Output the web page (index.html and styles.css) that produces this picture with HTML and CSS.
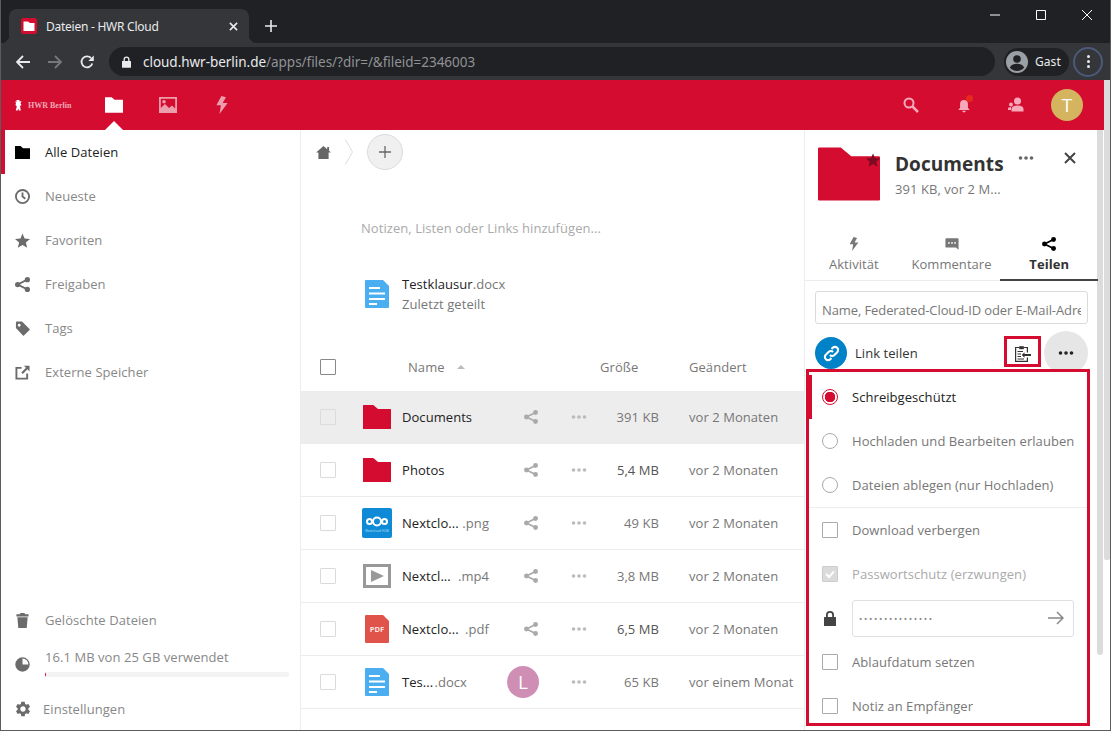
FILE: index.html
```html
<!DOCTYPE html>
<html lang="de">
<head>
  <meta charset="UTF-8" />
  <title>Dateien - HWR Cloud</title>
  <link rel="stylesheet" href="styles.css">
</head>
<body>
  <svg class="sprite" xmlns="http://www.w3.org/2000/svg">
    <symbol id="i-folder" viewBox="0 0 28 24"><path d="M0 .5Q0 0 .5 0H10.300L15 4H27.500Q28 4 28 4.500V23.500Q28 24 27.500 24H.5Q0 24 0 23.500Z"/></symbol>
    <symbol id="i-share" viewBox="0 0 16 16"><circle cx="2.800" cy="8" r="2.800"/><circle cx="13.200" cy="2.800" r="2.800"/><circle cx="13.200" cy="13.200" r="2.800"/><path d="M2.800 8 13.200 2.800M2.800 8l10.400 5.200" fill="none" stroke="currentColor" stroke-width="2"/></symbol>
    <symbol id="i-dots" viewBox="0 0 16 4"><circle cx="2.500" cy="2" r="1.800"/><circle cx="8" cy="2" r="1.800"/><circle cx="13.500" cy="2" r="1.800"/></symbol>
    <symbol id="i-bolt" viewBox="0 0 12 16"><path d="M5.500 0 1 8.300H5L3.800 16 11 6.300H6.600L9.500 1.200Z"/></symbol>
    <symbol id="i-clock" viewBox="0 0 16 16"><circle cx="8" cy="8" r="7" fill="none" stroke="currentColor" stroke-width="2"/><path d="M8 3.600V8l3 2.400" fill="none" stroke="currentColor" stroke-width="2"/></symbol>
    <symbol id="i-star" viewBox="0 0 16 16"><path d="M8 .5 10.200 5.800 16 6.300 11.600 10.100 13 15.700 8 12.700 3 15.700 4.400 10.100 0 6.300 5.800 5.800Z"/></symbol>
    <symbol id="i-tag" viewBox="0 0 16 16"><path d="M1 1.500Q1 .5 2 .5H7.500L15.500 8.500Q16 9 15.500 9.500L9.500 15.500Q9 16 8.500 15.500L1 7.500ZM4.500 3A1.500 1.500 0 1 0 4.500 6 1.500 1.500 0 0 0 4.500 3Z" fill-rule="evenodd"/></symbol>
    <symbol id="i-external" viewBox="0 0 16 16"><path d="M7 3H1.500V14.500H13V9" fill="none" stroke="currentColor" stroke-width="2"/><path d="M9.500 .8H15.500V6.800L13.300 4.600 8.300 9.600 6.700 8 11.700 3Z"/></symbol>
    <symbol id="i-trash" viewBox="0 0 16 16"><path d="M6 0H10L11 1.200H14.500V3.600H1.500V1.200H5ZM2.500 4.600H13.500L12.500 16H3.500Z"/></symbol>
    <symbol id="i-pie" viewBox="0 0 16 16"><path d="M8 8V1A7 7 0 1 0 15 8Z"/><circle cx="8" cy="8" r="7" fill="none" stroke="currentColor" stroke-width="1.400"/></symbol>
    <symbol id="i-gear" viewBox="0 0 24 24"><path d="M19.140 12.940c.04-.3.06-.61.06-.94 0-.32-.02-.64-.07-.94l2.030-1.580c.18-.14.23-.41.12-.61l-1.920-3.320c-.12-.22-.37-.29-.59-.22l-2.390.96c-.5-.38-1.030-.7-1.620-.94l-.36-2.540c-.04-.24-.24-.41-.48-.41h-3.840c-.24 0-.43.17-.47.41l-.36 2.540c-.59.24-1.130.57-1.620.94l-2.390-.96c-.22-.08-.47 0-.59.22L2.740 8.870c-.12.21-.08.47.12.61l2.030 1.580c-.05.3-.09.63-.09.94s.02.64.07.94l-2.030 1.580c-.18.14-.23.41-.12.61l1.920 3.320c.12.22.37.29.59.22l2.390-.96c.5.38 1.030.7 1.620.94l.36 2.540c.05.24.24.41.48.41h3.840c.24 0 .44-.17.47-.41l.36-2.540c.59-.24 1.130-.56 1.620-.94l2.390.96c.22.08.47 0 .59-.22l1.920-3.320c.12-.22.07-.47-.12-.61l-2.010-1.580zM12 15.600c-1.980 0-3.600-1.620-3.600-3.600s1.620-3.600 3.600-3.600 3.600 1.620 3.600 3.600-1.620 3.600-3.600 3.600z"/></symbol>
    <symbol id="i-doc" viewBox="0 0 24 28"><path d="M1 0H18L24 6V27Q24 28 23 28H1Q0 28 0 27V1Q0 0 1 0Z"/><path d="M4 7H15V9H4ZM4 12.500H20V14.500H4ZM4 18H20V20H4ZM4 23H12V25H4Z" fill="#fff"/></symbol>
    <symbol id="i-lock" viewBox="0 0 12 15"><path d="M6 0A4 4 0 0 1 10 4V6H11.500Q12 6 12 6.500V14.500Q12 15 11.500 15H.5Q0 15 0 14.500V6.500Q0 6 .5 6H2V4A4 4 0 0 1 6 0ZM6 1.800A2.200 2.200 0 0 0 3.800 4V6H8.200V4A2.200 2.200 0 0 0 6 1.800Z"/></symbol>
  </svg>

  <div class="window">
    <div class="titlebar">
      <div class="tab">
        <svg class="favicon" viewBox="0 0 16 16"><rect width="16" height="16" rx="2.500" fill="#d40c30"/><path d="M2.500 3.500H7L9 5H13.500V13H2.500Z" fill="#fff"/></svg>
        <span class="tab-title">Dateien - HWR Cloud</span>
        <svg class="tab-close" viewBox="0 0 10 10"><path d="M1 1 9 9M9 1 1 9" stroke="#e8eaed" stroke-width="1.800"/></svg>
      </div>
      <svg class="new-tab" viewBox="0 0 12 12"><path d="M6 0V12M0 6H12" stroke="#e8eaed" stroke-width="1.600"/></svg>
      <div class="win-controls">
        <div class="win-btn"><svg viewBox="0 0 10 10"><path d="M0 5H10" stroke="#fff"/></svg></div>
        <div class="win-btn"><svg viewBox="0 0 10 10"><path d="M.5.5H9.500V9.500H.5Z" fill="none" stroke="#fff"/></svg></div>
        <div class="win-btn"><svg viewBox="0 0 10 10"><path d="M0 0 10 10M10 0 0 10" stroke="#fff"/></svg></div>
      </div>
    </div>

    <div class="toolbar">
      <svg class="nav-btn" viewBox="0 0 14 14"><path d="M14 7H1.500M7 1 1 7l6 6" fill="none" stroke="#e8eaed" stroke-width="1.800"/></svg>
      <svg class="nav-btn" viewBox="0 0 14 14"><path d="M0 7H12.500M7 1l6 6-6 6" fill="none" stroke="#77787a" stroke-width="1.800"/></svg>
      <svg class="nav-btn" viewBox="0 0 14 14"><path d="M12.300 8.500A5.500 5.500 0 1 1 11 3" fill="none" stroke="#e8eaed" stroke-width="1.800"/><path d="M13.800 .5V6H8.300Z" fill="#e8eaed"/></svg>
      <div class="omnibox">
        <svg class="omni-lock"><use href="#i-lock"/></svg>
        <span class="url"><b>cloud.hwr-berlin.de</b>/apps/files/?dir=/&amp;fileid=2346003</span>
      </div>
      <div class="guest">
        <svg class="guest-pic" viewBox="0 0 22 22"><circle cx="11" cy="11" r="11" fill="#9aa0a6"/><circle cx="11" cy="8" r="3.800" fill="#202124"/><path d="M3.800 16.500C5.500 13.500 8 12.800 11 12.800S16.500 13.500 18.200 16.500C16.500 18.800 14 20 11 20S5.500 18.800 3.800 16.500Z" fill="#202124"/></svg>
        <span>Gast</span>
      </div>
      <div class="chrome-menu"><i></i><i></i><i></i></div>
    </div>

    <div class="page">
      <div class="main">
        <header class="app-header">
          <div class="logo">
            <svg class="logo-bear" viewBox="0 0 7 11"><path d="M1.500 0H4.500V1.500L6.500 1 5.500 3.500 6.500 5 5 6 5.800 10.500H3.800L3.300 8.500 2.500 10.500H.8L1.800 6.500 .5 5 1 3 0 1.500 1.500 1.800Z" fill="#fff"/></svg>
            <span>HWR Berlin</span>
          </div>
          <nav class="app-menu">
            <a class="app-link is-active"><svg class="ic-files"><use href="#i-folder"/></svg></a>
            <a class="app-link">
              <svg class="ic-photos" viewBox="0 0 18 16"><path d="M0 0H18V16H0ZM1.800 1.800V11L6 7 10 11 13 8.500 16.200 11.500V1.800ZM5 3A1.800 1.800 0 1 0 5 6.600 1.800 1.800 0 0 0 5 3Z" fill-rule="evenodd"/></svg>
            </a>
            <a class="app-link"><svg class="ic-bolt"><use href="#i-bolt"/></svg></a>
          </nav>
          <div class="header-right">
            <svg class="head-ic" viewBox="0 0 16 16"><circle cx="6" cy="6" r="4.500" fill="none" stroke="currentColor" stroke-width="2"/><path d="M9.500 9.500 15 15" stroke="currentColor" stroke-width="2.500"/></svg>
            <div class="bell">
              <svg class="head-ic bell-ic" viewBox="0 0 16 16"><path d="M8 1A4.500 4.500 0 0 1 12.500 5.500V10L14.500 12.500H1.500L3.500 10V5.500A4.500 4.500 0 0 1 8 1ZM6 13.500H10A2 2 0 0 1 6 13.500Z"/></svg>
              <i class="bell-dot"></i>
            </div>
            <svg class="head-ic" viewBox="0 0 16 16"><circle cx="9.500" cy="4" r="3.500"/><path d="M3.500 14.500V12Q3.500 8.500 9.500 8.500T15.500 12V14.500Z"/><circle cx="3" cy="7.500" r="2"/><path d="M0 13V11.500Q0 10 3 10V13Z"/></svg>
            <div class="avatar avatar-t">T</div>
          </div>
        </header>

        <div class="app-body">
          <aside class="sidebar">
            <ul class="nav">
              <li class="nav-item is-active"><svg class="nav-ic ic-nav-folder"><use href="#i-folder"/></svg>Alle Dateien</li>
              <li class="nav-item"><svg class="nav-ic"><use href="#i-clock"/></svg>Neueste</li>
              <li class="nav-item"><svg class="nav-ic"><use href="#i-star"/></svg>Favoriten</li>
              <li class="nav-item"><svg class="nav-ic"><use href="#i-share"/></svg>Freigaben</li>
              <li class="nav-item"><svg class="nav-ic"><use href="#i-tag"/></svg>Tags</li>
              <li class="nav-item"><svg class="nav-ic"><use href="#i-external"/></svg>Externe Speicher</li>
            </ul>
            <div class="nav-bottom">
              <div class="nav-item"><svg class="nav-ic"><use href="#i-trash"/></svg>Gelöschte Dateien</div>
              <div class="quota">
                <svg class="nav-ic"><use href="#i-pie"/></svg>
                <div class="quota-info">
                  <div>16.1 MB von 25 GB verwendet</div>
                  <div class="quota-bar"><i></i></div>
                </div>
              </div>
              <div class="nav-item settings"><svg class="nav-ic ic-gear"><use href="#i-gear"/></svg>Einstellungen</div>
            </div>
          </aside>

          <main class="content">
            <div class="breadcrumb">
              <svg class="crumb-home" viewBox="0 0 16 14"><path d="M8 0 12 3.500V1H14V5.200L16 7H13.500V14H2.500V7H0Z"/></svg>
              <svg class="crumb-sep" viewBox="0 0 8 26"><path d="M.5 .5 7.500 13 .5 25.500" fill="none" stroke="#ddd"/></svg>
              <div class="crumb-add"><svg viewBox="0 0 14 14"><path d="M7 0V14M0 7H14" stroke="#666" stroke-width="1.500"/></svg></div>
            </div>
            <div class="notes">Notizen, Listen oder Links hinzufügen...</div>
            <div class="recent">
              <svg class="file-ic-doc"><use href="#i-doc"/></svg>
              <div>
                <div class="recent-name">Testklausur<span>.docx</span></div>
                <div class="recent-sub">Zuletzt geteilt</div>
              </div>
            </div>

            <div class="file-head">
              <span class="check check-head"></span>
              <span class="col-name">Name <svg class="sort" viewBox="0 0 8 4"><path d="M4 0 8 4H0Z"/></svg></span>
              <span class="col-size">Größe</span>
              <span class="col-date">Geändert</span>
            </div>

            <div class="file-row is-selected">
              <span class="check"></span>
              <svg class="file-ic-folder"><use href="#i-folder"/></svg>
              <span class="file-name">Documents</span>
              <svg class="row-share"><use href="#i-share"/></svg>
              <svg class="row-dots"><use href="#i-dots"/></svg>
              <span class="file-size">391 KB</span>
              <span class="file-date">vor 2 Monaten</span>
            </div>
            <div class="file-row">
              <span class="check"></span>
              <svg class="file-ic-folder"><use href="#i-folder"/></svg>
              <span class="file-name">Photos</span>
              <svg class="row-share"><use href="#i-share"/></svg>
              <svg class="row-dots"><use href="#i-dots"/></svg>
              <span class="file-size is-big">5,4 MB</span>
              <span class="file-date">vor 2 Monaten</span>
            </div>
            <div class="file-row">
              <span class="check"></span>
              <svg class="file-ic-png" viewBox="0 0 30 30">
                <rect width="30" height="30" rx="2" fill="#0f8ad6"/>
                <g fill="none" stroke="#fff" stroke-width="2"><circle cx="15" cy="13.500" r="4"/><circle cx="7.500" cy="13.500" r="2.500"/><circle cx="22.500" cy="13.500" r="2.500"/></g>
                <text x="15" y="24" text-anchor="middle" font-size="3.200" fill="#bfe3f8">Nextcloud HUB</text>
              </svg>
              <span class="file-name is-split"><span>Nextclo...</span><em>.png</em></span>
              <svg class="row-share"><use href="#i-share"/></svg>
              <svg class="row-dots"><use href="#i-dots"/></svg>
              <span class="file-size">49 KB</span>
              <span class="file-date">vor 2 Monaten</span>
            </div>
            <div class="file-row">
              <span class="check"></span>
              <svg class="file-ic-video" viewBox="0 0 28 24"><path d="M1.500 1.500H26.500V22.500H1.500Z" fill="none" stroke="#999" stroke-width="3"/><path d="M8 6 21 12 8 18Z" fill="#999"/></svg>
              <span class="file-name is-split"><span>Nextcl...</span><em>.mp4</em></span>
              <svg class="row-share"><use href="#i-share"/></svg>
              <svg class="row-dots"><use href="#i-dots"/></svg>
              <span class="file-size">3,8 MB</span>
              <span class="file-date">vor 2 Monaten</span>
            </div>
            <div class="file-row">
              <span class="check"></span>
              <svg class="file-ic-doc" viewBox="0 0 24 28">
                <path d="M1 0H18L24 6V27Q24 28 23 28H1Q0 28 0 27V1Q0 0 1 0Z" fill="#e0534a"/>
                <text x="12" y="17" text-anchor="middle" font-size="7.500" font-weight="700" fill="#fff" opacity=".85">PDF</text>
              </svg>
              <span class="file-name is-split"><span>Nextclo...</span><em>.pdf</em></span>
              <svg class="row-share"><use href="#i-share"/></svg>
              <svg class="row-dots"><use href="#i-dots"/></svg>
              <span class="file-size is-big">6,5 MB</span>
              <span class="file-date">vor 2 Monaten</span>
            </div>
            <div class="file-row">
              <span class="check"></span>
              <svg class="file-ic-doc"><use href="#i-doc"/></svg>
              <span class="file-name is-split is-short"><span>Tes...</span><em>.docx</em></span>
              <div class="avatar avatar-l">L</div>
              <svg class="row-dots"><use href="#i-dots"/></svg>
              <span class="file-size">65 KB</span>
              <span class="file-date">vor einem Monat</span>
            </div>
          </main>

          <section class="panel">
            <div class="panel-head">
              <div class="panel-thumb">
                <svg class="panel-folder"><use href="#i-folder"/></svg>
                <svg class="panel-star"><use href="#i-star"/></svg>
              </div>
              <div class="panel-title">
                <h2>Documents</h2>
                <p>391 KB, vor 2 M...</p>
              </div>
              <svg class="panel-dots"><use href="#i-dots"/></svg>
              <svg class="panel-close" viewBox="0 0 12 12"><path d="M1 1 11 11M11 1 1 11" stroke="#444" stroke-width="2"/></svg>
            </div>
            <div class="tabs">
              <div class="tab-item"><svg><use href="#i-bolt"/></svg>Aktivität</div>
              <div class="tab-item">
                <svg viewBox="0 0 16 16"><path d="M1.500 1.500H14.500Q15.500 1.500 15.500 2.500V14.500L12.500 12H1.500Q.5 12 .5 11V2.500Q.5 1.500 1.500 1.500Z"/><circle cx="4.500" cy="6.800" r="1" fill="#fff"/><circle cx="8" cy="6.800" r="1" fill="#fff"/><circle cx="11.500" cy="6.800" r="1" fill="#fff"/></svg>
                Kommentare
              </div>
              <div class="tab-item is-active"><svg><use href="#i-share"/></svg>Teilen</div>
            </div>
            <input class="share-input" type="text" placeholder="Name, Federated-Cloud-ID oder E-Mail-Adresse …">
            <div class="link-row">
              <div class="link-circle">
                <svg viewBox="0 0 24 24"><path d="M10 14a4 4 0 0 0 5.700 0l3.500-3.500a4 4 0 0 0-5.700-5.700l-1.500 1.500M14 10a4 4 0 0 0-5.700 0l-3.500 3.500a4 4 0 0 0 5.700 5.700l1.500-1.500" fill="none" stroke="#fff" stroke-width="2.600"/></svg>
              </div>
              <span class="link-label">Link teilen</span>
              <div class="clip-box">
                <svg viewBox="0 0 16 17"><path d="M4.500 2.500H.6V16.400H12.400V12.500M12.400 7.500V2.500H8.500" fill="none" stroke="#333" stroke-width="1.200"/><path d="M4.200 1.200H8.800V4.200H4.200Z" fill="#333"/><path d="M2.500 6.500H8M2.500 9H6M2.500 11.500H6M2.500 14H9" stroke="#333"/><path d="M16 9H9.500V7.200L6.800 10 9.500 12.800V11H16Z" fill="#333"/></svg>
              </div>
              <div class="more-circle"><svg><use href="#i-dots"/></svg></div>
            </div>

            <div class="share-menu">
              <div class="menu-row is-active"><span class="radio is-on"></span>Schreibgeschützt</div>
              <div class="menu-row"><span class="radio"></span>Hochladen und Bearbeiten erlauben</div>
              <div class="menu-row has-rule"><span class="radio"></span>Dateien ablegen (nur Hochladen)</div>
              <div class="menu-row"><span class="box"></span>Download verbergen</div>
              <div class="menu-row is-disabled">
                <span class="box is-checked"><svg viewBox="0 0 16 16"><path d="M3.500 8 7 11.500 12.500 5" fill="none" stroke="#fff" stroke-width="2.400"/></svg></span>
                Passwortschutz (erzwungen)
              </div>
              <div class="menu-row">
                <svg class="menu-lock"><use href="#i-lock"/></svg>
                <div class="pass-field">
                  <span>•••••••••••••••</span>
                  <svg viewBox="0 0 16 14"><path d="M0 7H15M9 1l6 6-6 6" fill="none" stroke="#888" stroke-width="1.500"/></svg>
                </div>
              </div>
              <div class="menu-row"><span class="box"></span>Ablaufdatum setzen</div>
              <div class="menu-row"><span class="box"></span>Notiz an Empfänger</div>
            </div>
          </section>

          <div class="panel-scroll"></div>
        </div>
      </div>
      <div class="page-scroll"></div>
    </div>
  </div>
</body>
</html>
```

FILE: styles.css
```css
* {
  box-sizing: border-box;
}

html, body {
  margin: 0;
  padding: 0;
  overflow: hidden;
}

body {
  font-family: 'Open Sans', sans-serif;
  font-size: 13px;
  letter-spacing: .06px;
  color: #222;
}

svg {
  fill: currentColor;
  flex: none;
}

.sprite {
  display: none;
}

.window {
  width: 1111px;
  height: 731px;
  display: flex;
  flex-direction: column;
  border: 1px solid #5c5c5c;
  border-top: 0;
  background: #fff;
  overflow: hidden;
}

/* browser frame */
.titlebar {
  height: 43px;
  flex: none;
  display: flex;
  background: #202124;
  padding-left: 8px;
}

.tab {
  position: relative;
  width: 240px;
  height: 34px;
  margin-top: 9px;
  display: flex;
  align-items: center;
  padding: 0 11px 0 12px;
  background: #35363a;
  border-radius: 8px 8px 0 0;
}

.tab::before,
.tab::after {
  content: '';
  position: absolute;
  bottom: 0;
  width: 8px;
  height: 8px;
}

.tab::before {
  left: -8px;
  background: radial-gradient(circle at 0 0, #202124 8px, #35363a 8.5px);
}

.tab::after {
  right: -8px;
  background: radial-gradient(circle at 100% 0, #202124 8px, #35363a 8.5px);
}

.favicon {
  width: 16px;
  height: 16px;
}

.tab-title {
  margin-left: 9px;
  color: #e8eaed;
  font-family: 'Noto Sans', sans-serif;
  font-size: 12px;
  letter-spacing: -.25px;
}

.tab-close {
  width: 9px;
  height: 9px;
  margin-left: auto;
}

.new-tab {
  width: 12px;
  height: 12px;
  margin: 20px 0 0 16px;
}

.win-controls {
  margin-left: auto;
  display: flex;
}

.win-btn {
  width: 46px;
  height: 30px;
  display: flex;
  align-items: center;
  justify-content: center;
}

.win-btn svg {
  width: 10px;
  height: 10px;
}

.toolbar {
  height: 37px;
  flex: none;
  display: flex;
  align-items: center;
  background: #35363a;
  padding-left: 15px;
}

.nav-btn {
  width: 14px;
  height: 14px;
  margin-right: 18px;
}

.omnibox {
  width: 886px;
  height: 29px;
  margin-left: -3px;
  display: flex;
  align-items: center;
  padding-left: 13px;
  background: #202124;
  border-radius: 15px;
}

.omni-lock {
  width: 9px;
  height: 12px;
  color: #e8eaed;
}

.url {
  margin-left: 12px;
  color: #8f9296;
  font-family: 'Noto Sans', sans-serif;
  font-size: 13.500px;
  letter-spacing: -.03px;
}

.url b {
  color: #e8eaed;
  font-weight: 400;
}

.guest {
  width: 65px;
  height: 28px;
  margin-left: 9px;
  display: flex;
  align-items: center;
  gap: 7px;
  padding-left: 2px;
  background: #202124;
  border-radius: 14px;
  color: #e8eaed;
  font-family: 'Noto Sans', sans-serif;
  font-size: 12px;
}

.guest-pic {
  width: 22px;
  height: 22px;
}

.chrome-menu {
  width: 30px;
  height: 30px;
  margin-left: 4px;
  display: flex;
  flex-direction: column;
  align-items: center;
  justify-content: center;
  gap: 2px;
  border: 2px solid #4a5a78;
  border-radius: 50%;
}

.chrome-menu i {
  width: 3px;
  height: 3px;
  background: #e8eaed;
  border-radius: 50%;
}

/* app */
.page {
  flex: 1;
  min-height: 0;
  display: flex;
}

.main {
  width: 1103px;
  display: flex;
  flex-direction: column;
}

.page-scroll {
  width: 6px;
  height: 480px;
  background: #dcdcdc;
  border-radius: 0 0 2px 2px;
}

.app-header {
  height: 50px;
  flex: none;
  display: flex;
  align-items: center;
  background: #d40c30;
  color: #fff;
}

.logo {
  width: 85px;
  padding-left: 14px;
  display: flex;
  align-items: center;
  gap: 6px;
  color: #f0a8b6;
  font-family: 'Liberation Serif', serif;
  font-weight: 700;
  font-size: 8px;
  letter-spacing: 0;
}

.logo-bear {
  width: 7px;
  height: 11px;
}

.app-menu {
  display: flex;
}

.app-link {
  position: relative;
  width: 55px;
  height: 50px;
  margin-right: -1px;
  display: flex;
  align-items: center;
  justify-content: center;
  color: #fff;
  opacity: .6;
}

.app-link.is-active {
  opacity: 1;
}

.app-link.is-active::after {
  content: '';
  position: absolute;
  left: 50%;
  bottom: 0;
  margin-left: -9px;
  border: 9px solid transparent;
  border-top: 0;
  border-bottom-color: #fff;
}

.ic-files {
  width: 18px;
  height: 16px;
}

.ic-photos {
  width: 18px;
  height: 16px;
}

.ic-bolt {
  width: 14px;
  height: 18px;
}

.header-right {
  margin-left: auto;
  display: flex;
  align-items: center;
  padding-right: 21px;
  color: #f5a9b9;
}

.head-ic {
  width: 16px;
  height: 16px;
}

.bell {
  position: relative;
  display: flex;
  margin: 0 36px 0 37px;
}

.bell-ic {
  width: 14px;
  height: 14px;
  margin: 2px 1px 0;
}

.bell-dot {
  position: absolute;
  top: -2px;
  right: -1px;
  width: 7px;
  height: 7px;
  background: #e62b1e;
  border-radius: 50%;
}

.avatar {
  width: 32px;
  height: 32px;
  display: flex;
  align-items: center;
  justify-content: center;
  border-radius: 50%;
  color: #fff;
  font-size: 19px;
}

.avatar-t {
  margin-left: 27px;
  background: #d4b45e;
}

.avatar-l {
  justify-self: end;
  margin-right: 4px;
  background: #cf8fb5;
}

.app-body {
  flex: 1;
  min-height: 0;
  display: flex;
}

/* left navigation */
.sidebar {
  width: 300px;
  flex: none;
  display: flex;
  flex-direction: column;
  border-right: 1px solid #ededed;
  color: #888;
}

.nav {
  list-style: none;
  margin: 0;
  padding: 0;
}

.nav-item {
  height: 44px;
  display: flex;
  align-items: center;
  gap: 15px;
  padding-left: 14px;
}

.nav-item.is-active {
  padding-left: 10px;
  border-left: 4px solid #d40c30;
  color: #222;
}

.nav-ic {
  width: 15px;
  height: 15px;
  color: #6b6b6b;
}

.ic-nav-folder {
  color: #000;
  height: 13px;
}

.nav-bottom {
  margin-top: auto;
}

.quota {
  height: 44px;
  display: flex;
  align-items: center;
  gap: 15px;
  padding: 0 11px 0 14px;
}

.quota-info {
  flex: 1;
  padding-bottom: 4px;
}

.quota-bar {
  height: 5px;
  margin-top: 6px;
  background: #f3f3f3;
  border-radius: 3px;
  overflow: hidden;
}

.quota-bar i {
  display: block;
  width: 1px;
  height: 5px;
  background: #d40c30;
}

.settings {
  gap: 11px;
  padding-left: 13px;
  padding-top: 1px;
}

.ic-gear {
  width: 18px;
  height: 18px;
}

/* file list */
.content {
  width: 504px;
  flex: none;
}

.breadcrumb {
  height: 44px;
  display: flex;
  align-items: center;
  padding: 0 0 0 15px;
  margin-top: 0;
}

.crumb-home {
  width: 15px;
  height: 13px;
  color: #666;
}

.crumb-sep {
  width: 8px;
  height: 26px;
  margin-left: 14px;
}

.crumb-add {
  width: 36px;
  height: 36px;
  margin: 0 0 0 14px;
  display: flex;
  align-items: center;
  justify-content: center;
  background: #f0f0f0;
  border: 1px solid #dbdbdb;
  border-radius: 50%;
}

.crumb-add svg {
  width: 12px;
  height: 12px;
}

.notes {
  margin: 45px 0 0 60px;
  height: 18px;
  line-height: 18px;
  color: #aaa;
}

.recent {
  display: flex;
  align-items: center;
  gap: 13px;
  margin: 34px 0 0 64px;
  height: 46px;
  color: #777;
}

.recent-name {
  line-height: 20px;
  color: #222;
}

.recent-name span {
  color: #777;
}

.recent-sub {
  line-height: 20px;
}

.file-ic-doc {
  width: 24px;
  height: 28px;
  margin-left: 3px;
  color: #4aaef0;
}

.recent .file-ic-doc {
  margin-left: 0;
}

.file-head {
  height: 51px;
  margin-top: 23px;
  display: grid;
  grid-template-columns: 88px 192px 89px 1fr;
  align-items: center;
  padding-left: 19px;
  color: #777;
  padding-top: 2px;
}

.col-name {
  display: flex;
  align-items: center;
  gap: 12px;
}

.sort {
  width: 8px;
  height: 4px;
  color: #bbb;
}

.file-row {
  height: 53px;
  display: grid;
  grid-template-columns: 42px 40px 117px 24px 60px 56px 1fr;
  align-items: center;
  padding-left: 19px;
  border-bottom: 1px solid #ededed;
  color: #777;
}

.file-row.is-selected {
  background: #ededed;
  border-bottom-color: #ededed;
}

.check {
  width: 16px;
  height: 16px;
  border: 1px solid #dbdbdb;
  background: transparent;
  border-radius: 1px;
}

.check-head {
  border-color: #888;
}

.file-ic-folder {
  width: 28px;
  height: 24px;
  margin-left: 1px;
  color: #d40c30;
}

.file-ic-png {
  width: 30px;
  height: 30px;
}

.file-ic-video {
  width: 28px;
  height: 24px;
  margin-left: 1px;
}

.file-name {
  color: #222;
}

.file-name.is-split {
  width: 87px;
  display: flex;
  justify-content: space-between;
}

.file-name.is-short {
  width: 65px;
}

.file-name em {
  font-style: normal;
  color: #777;
}

.row-share {
  width: 14px;
  height: 14px;
  margin-left: 5px;
  color: #aaa;
}

.row-dots {
  width: 16px;
  height: 4px;
  margin-left: 28px;
  color: #bbb;
}

.file-size {
  text-align: right;
}

.file-size.is-big {
  color: #555;
}

.file-date {
  padding-left: 30px;
  white-space: nowrap;
}

/* details panel */
.panel {
  position: relative;
  width: 294px;
  flex: none;
  display: flex;
  flex-direction: column;
  margin-left: -1px;
  color: #777;
  border-left: 1px solid #ededed;
}

.panel-head {
  height: 105px;
  flex: none;
  display: flex;
  padding: 17px 0 0 13px;
}

.panel-thumb {
  position: relative;
  width: 62px;
  height: 54px;
}

.panel-folder {
  width: 62px;
  height: 54px;
  color: #d40c30;
}

.panel-star {
  position: absolute;
  top: 6px;
  right: 0;
  width: 14px;
  height: 14px;
  color: #7c0a20;
}

.panel-title {
  margin-left: 15px;
  width: 115px;
}

.panel-title h2 {
  margin: 2px 0 0;
  font-size: 19px;
  line-height: 30px;
  font-weight: 700;
  color: #333;
}

.panel-title p {
  margin: 0;
  line-height: 20px;
  white-space: nowrap;
}

.panel-dots {
  width: 16px;
  height: 4px;
  margin: 9px 0 0 8px;
  color: #666;
}

.panel-close {
  width: 12px;
  height: 12px;
  margin: 5px 0 0 30px;
}

.tabs {
  height: 46px;
  flex: none;
  display: flex;
  border-bottom: 1px solid #ededed;
}

.tab-item {
  position: relative;
  width: 98px;
  display: flex;
  flex-direction: column;
  align-items: center;
  padding-top: 2px;
  gap: 4px;
}

.tab-item svg {
  width: 14px;
  height: 14px;
  color: #777;
}

.tab-item.is-active {
  color: #333;
  font-weight: 700;
  height: 46px;
  border-bottom: 2px solid #444;
}

.tab-item.is-active svg {
  color: #000;
}

.share-input {
  width: 273px;
  height: 33px;
  flex: none;
  margin: 10px 0 0 10px;
  padding: 4px 6px 0;
  border: 1px solid #dbdbdb;
  border-radius: 3px;
  outline: 0;
  font: 13px 'Open Sans', sans-serif;
  letter-spacing: -.1px;
}

.share-input::placeholder {
  color: #777;
  opacity: 1;
}

.link-row {
  height: 44px;
  flex: none;
  margin-top: 7px;
  display: flex;
  align-items: center;
  padding-left: 10px;
}

.link-circle {
  width: 32px;
  height: 32px;
  display: flex;
  align-items: center;
  justify-content: center;
  background: #0082c9;
  border-radius: 50%;
}

.link-circle svg {
  width: 19px;
  height: 19px;
}

.link-label {
  margin-left: 8px;
  color: #333;
}

.clip-box {
  width: 37px;
  height: 31px;
  margin: 0 0 3px auto;
  display: flex;
  align-items: center;
  justify-content: center;
  border: 3px solid #d40c30;
}

.clip-box svg {
  width: 16px;
  height: 17px;
  margin-top: 3px;
}

.more-circle {
  width: 44px;
  height: 44px;
  margin: 0 10px 0 3px;
  display: flex;
  align-items: center;
  justify-content: center;
  background: #e6e6e6;
  border-radius: 50%;
  color: #222;
}

.more-circle svg {
  width: 16px;
  height: 4px;
}

.share-menu {
  position: absolute;
  top: 239px;
  left: 1px;
  width: 284px;
  height: 357px;
  padding-top: 3px;
  background: #fff;
  border: 3px solid #d40c30;
  overflow: hidden;
}

.menu-row {
  height: 44px;
  display: flex;
  align-items: center;
  gap: 14px;
  padding-left: 13px;
}

.menu-row.is-active {
  padding-left: 10px;
  border-left: 3px solid #d40c30;
  color: #222;
}

.menu-row.has-rule {
  height: 45px;
  border-bottom: 1px solid #ededed;
}

.menu-row.is-disabled {
  color: #aaa;
}

.radio,
.box {
  width: 16px;
  height: 16px;
  flex: none;
  border: 1px solid #aaa;
  background: #fff;
}

.radio {
  border-radius: 50%;
}

.radio.is-on {
  border-color: #d40c30;
  background: radial-gradient(circle, #d40c30 5px, #fff 5.500px);
}

.box {
  border-radius: 1px;
}

.box.is-checked {
  display: flex;
  background: #dbdbdb;
  border-color: #ccc;
}

.box.is-checked svg {
  width: 14px;
  height: 14px;
}

.menu-lock {
  width: 12px;
  height: 15px;
  margin: 0 2px;
  color: #444;
}

.pass-field {
  width: 222px;
  height: 37px;
  display: flex;
  align-items: center;
  justify-content: space-between;
  padding: 0 9px 0 6px;
  border: 1px solid #e0e0e0;
  border-radius: 3px;
  color: #888;
  font-size: 9px;
  letter-spacing: 1.6px;
}

.pass-field svg {
  width: 16px;
  height: 14px;
}

.panel-scroll {
  width: 6px;
  height: 525px;
  margin-left: -1px;
  background: #dcdcdc;
  border-radius: 0 0 3px 3px;
}
```
